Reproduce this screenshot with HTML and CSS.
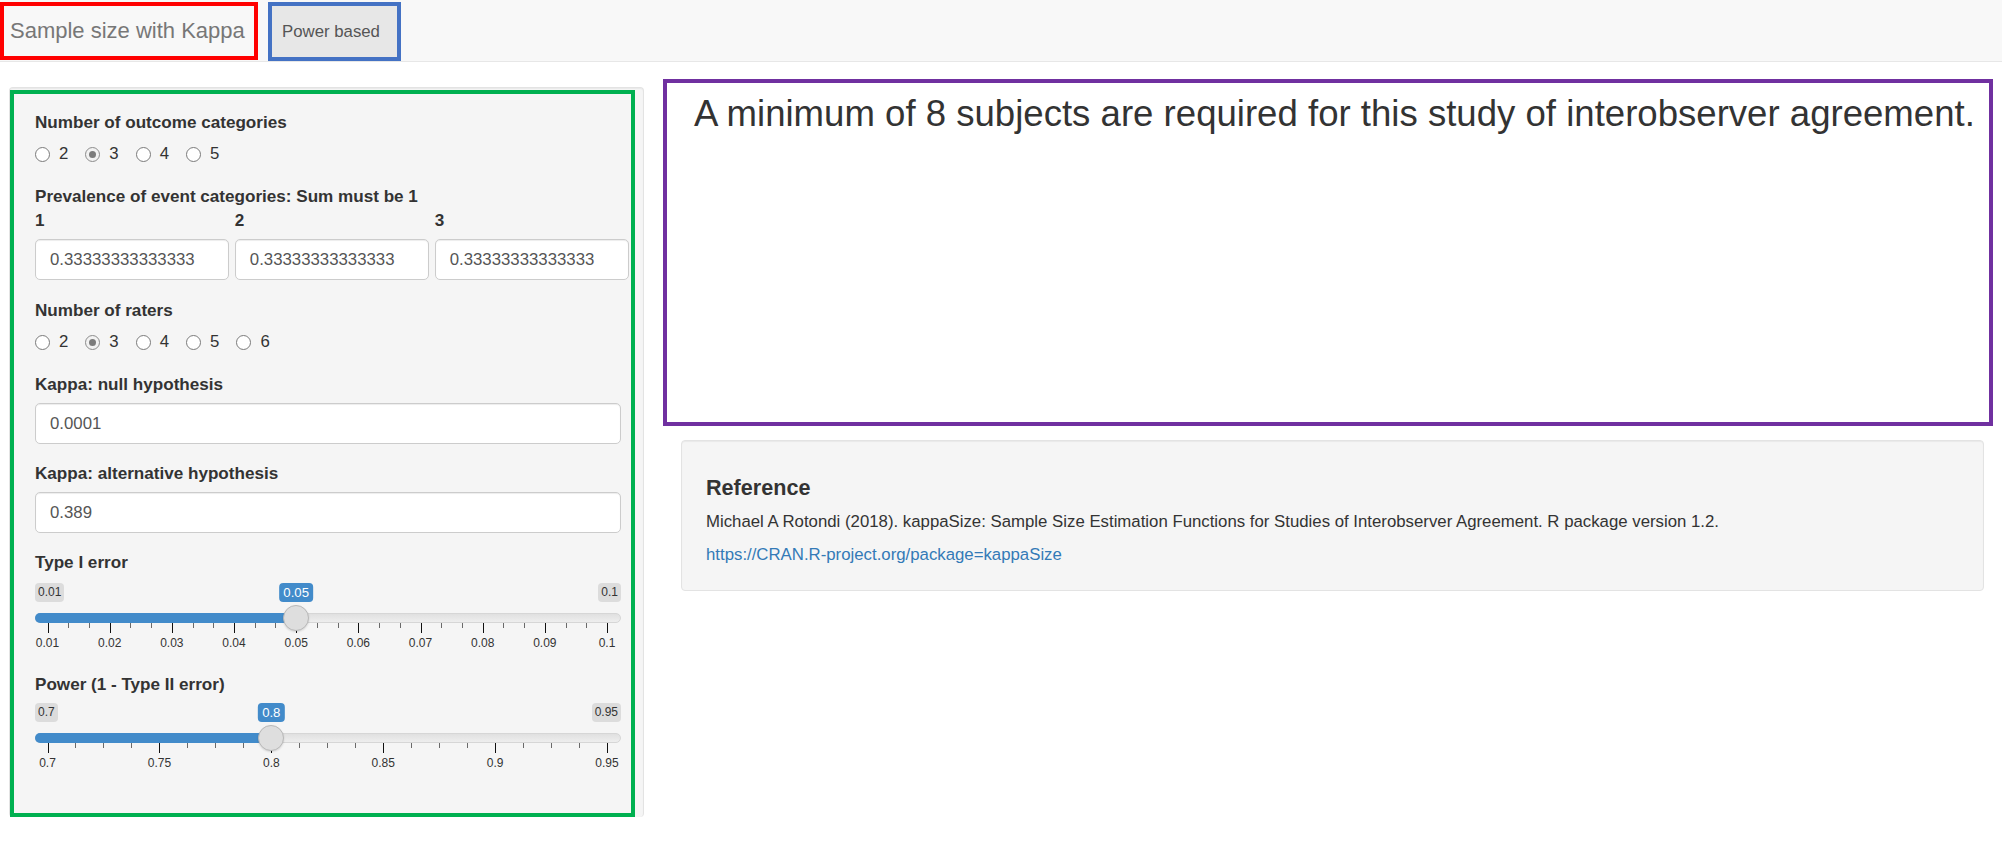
FILE: index.html
```html
<!DOCTYPE html>
<html lang="en">
<head>
<meta charset="utf-8">
<title>Sample size with Kappa</title>
<link rel="stylesheet" href="styles.css">
</head>
<body>
<nav class="navbar">
  <div class="brand">Sample size with Kappa</div>
  <div class="tab">Power based</div>
</nav>
<main class="page">
  <aside class="sidebar">
    <div class="well-side">
      <div class="annot-green">
        <div class="group">
          <div class="label">Number of outcome categories</div>
          <div class="radios">
            <span class="opt"><span class="radio"></span>2</span>
            <span class="opt"><span class="radio checked"></span>3</span>
            <span class="opt"><span class="radio"></span>4</span>
            <span class="opt"><span class="radio"></span>5</span>
          </div>
        </div>
        <div class="group group-prev">
          <div class="label label-tight">Prevalence of event categories: Sum must be 1</div>
          <div class="prev-grid">
            <div class="prev-col"><div class="label">1</div><div class="input">0.33333333333333</div></div>
            <div class="prev-col"><div class="label">2</div><div class="input">0.33333333333333</div></div>
            <div class="prev-col"><div class="label">3</div><div class="input">0.33333333333333</div></div>
          </div>
        </div>
        <div class="group">
          <div class="label">Number of raters</div>
          <div class="radios">
            <span class="opt"><span class="radio"></span>2</span>
            <span class="opt"><span class="radio checked"></span>3</span>
            <span class="opt"><span class="radio"></span>4</span>
            <span class="opt"><span class="radio"></span>5</span>
            <span class="opt"><span class="radio"></span>6</span>
          </div>
        </div>
        <div class="group">
          <div class="label">Kappa: null hypothesis</div>
          <div class="input">0.0001</div>
        </div>
        <div class="group">
          <div class="label">Kappa: alternative hypothesis</div>
          <div class="input">0.389</div>
        </div>
        <div class="group">
          <div class="label label-slider">Type I error</div>
          <div class="slider" style="--p:0.44444">
            <span class="irs-min">0.01</span>
            <span class="irs-max">0.1</span>
            <div class="irs-line"></div>
            <div class="irs-bar"></div>
            <div class="irs-grid">
              <span class="tick major" style="left:0%"></span><span class="tlabel" style="left:0%">0.01</span>
              <span class="tick" style="left:3.704%"></span><span class="tick" style="left:7.407%"></span>
              <span class="tick major" style="left:11.111%"></span><span class="tlabel" style="left:11.111%">0.02</span>
              <span class="tick" style="left:14.815%"></span><span class="tick" style="left:18.519%"></span>
              <span class="tick major" style="left:22.222%"></span><span class="tlabel" style="left:22.222%">0.03</span>
              <span class="tick" style="left:25.926%"></span><span class="tick" style="left:29.630%"></span>
              <span class="tick major" style="left:33.333%"></span><span class="tlabel" style="left:33.333%">0.04</span>
              <span class="tick" style="left:37.037%"></span><span class="tick" style="left:40.741%"></span>
              <span class="tick major" style="left:44.444%"></span><span class="tlabel" style="left:44.444%">0.05</span>
              <span class="tick" style="left:48.148%"></span><span class="tick" style="left:51.852%"></span>
              <span class="tick major" style="left:55.556%"></span><span class="tlabel" style="left:55.556%">0.06</span>
              <span class="tick" style="left:59.259%"></span><span class="tick" style="left:62.963%"></span>
              <span class="tick major" style="left:66.667%"></span><span class="tlabel" style="left:66.667%">0.07</span>
              <span class="tick" style="left:70.370%"></span><span class="tick" style="left:74.074%"></span>
              <span class="tick major" style="left:77.778%"></span><span class="tlabel" style="left:77.778%">0.08</span>
              <span class="tick" style="left:81.481%"></span><span class="tick" style="left:85.185%"></span>
              <span class="tick major" style="left:88.889%"></span><span class="tlabel" style="left:88.889%">0.09</span>
              <span class="tick" style="left:92.593%"></span><span class="tick" style="left:96.296%"></span>
              <span class="tick major" style="left:100%"></span><span class="tlabel" style="left:100%">0.1</span>
            </div>
            <div class="irs-handle"></div>
            <span class="irs-single">0.05</span>
          </div>
        </div>
        <div class="group group-last">
          <div class="label">Power (1 - Type II error)</div>
          <div class="slider" style="--p:0.4">
            <span class="irs-min">0.7</span>
            <span class="irs-max">0.95</span>
            <div class="irs-line"></div>
            <div class="irs-bar"></div>
            <div class="irs-grid">
              <span class="tick major" style="left:0%"></span><span class="tlabel" style="left:0%">0.7</span>
              <span class="tick" style="left:5%"></span><span class="tick" style="left:10%"></span><span class="tick" style="left:15%"></span>
              <span class="tick major" style="left:20%"></span><span class="tlabel" style="left:20%">0.75</span>
              <span class="tick" style="left:25%"></span><span class="tick" style="left:30%"></span><span class="tick" style="left:35%"></span>
              <span class="tick major" style="left:40%"></span><span class="tlabel" style="left:40%">0.8</span>
              <span class="tick" style="left:45%"></span><span class="tick" style="left:50%"></span><span class="tick" style="left:55%"></span>
              <span class="tick major" style="left:60%"></span><span class="tlabel" style="left:60%">0.85</span>
              <span class="tick" style="left:65%"></span><span class="tick" style="left:70%"></span><span class="tick" style="left:75%"></span>
              <span class="tick major" style="left:80%"></span><span class="tlabel" style="left:80%">0.9</span>
              <span class="tick" style="left:85%"></span><span class="tick" style="left:90%"></span><span class="tick" style="left:95%"></span>
              <span class="tick major" style="left:100%"></span><span class="tlabel" style="left:100%">0.95</span>
            </div>
            <div class="irs-handle"></div>
            <span class="irs-single">0.8</span>
          </div>
        </div>
      </div>
    </div>
  </aside>
  <section class="main-col">
    <div class="output-box">
      <h1 class="result">A minimum of 8 subjects are required for this study of interobserver agreement.</h1>
    </div>
    <div class="ref">
      <h4 class="ref-title">Reference</h4>
      <p class="ref-text">Michael A Rotondi (2018). kappaSize: Sample Size Estimation Functions for Studies of Interobserver Agreement. R package version 1.2.</p>
      <p class="ref-text ref-last"><a class="ref-link" href="#">https://CRAN.R-project.org/package=kappaSize</a></p>
    </div>
  </section>
</main>
</body>
</html>
```

FILE: styles.css
```css
html, body {
  margin: 0;
  padding: 0;
}

body {
  font-family: "Liberation Sans", Arial, Helvetica, sans-serif;
  font-size: 16.8px;
  line-height: 24px;
  color: #333;
  background: #fff;
}

/* ---------- navbar ---------- */
.navbar {
  display: flex;
  align-items: flex-start;
  height: 61px;
  background: #f8f8f8;
  border-bottom: 1px solid #e7e7e7;
}

.brand {
  box-sizing: border-box;
  display: flex;
  align-items: center;
  margin-top: 2px;
  width: 258px;
  height: 58px;
  padding-left: 6px;
  border: 4px solid #ff0000;
  font-size: 22px;
  color: #777;
  white-space: nowrap;
}

.tab {
  box-sizing: border-box;
  display: flex;
  align-items: center;
  margin-top: 2px;
  margin-left: 10px;
  width: 133px;
  height: 59px;
  padding-left: 10px;
  border: 4px solid #4472c4;
  background: #e7e7e7;
  color: #555;
  white-space: nowrap;
}

/* ---------- page layout ---------- */
.page {
  display: flex;
  align-items: flex-start;
  padding-left: 9px;
}

.sidebar {
  width: 635px;
  flex: 0 0 635px;
  margin-top: 25px;
}

.well-side {
  box-sizing: border-box;
  background: #f5f5f5;
  border: 1px solid #e3e3e3;
  border-bottom: 0;
  border-radius: 4px;
  padding: 2px 8px 0 0;
  box-shadow: inset 0 1px 1px rgba(0, 0, 0, 0.05);
}

.annot-green {
  border: 4px solid #00b050;
  padding: 17px 10px 38px 21px;
}

/* ---------- form ---------- */
.group {
  margin-bottom: 18px;
}

.group-prev {
  margin-bottom: 19px;
}

.group-last {
  margin-bottom: 0;
}

.label {
  font-weight: bold;
  font-size: 17.1px;
  margin-bottom: 6px;
  white-space: nowrap;
}

.label-tight {
  margin-bottom: 0;
}

.label-slider {
  margin-bottom: 8px;
}

.radios {
  display: flex;
  align-items: center;
  gap: 17px;
  height: 26px;
}

.opt {
  display: flex;
  align-items: center;
  gap: 9px;
}

.radio {
  box-sizing: border-box;
  display: inline-block;
  width: 15px;
  height: 15px;
  border: 1px solid #7a7a7a;
  border-radius: 50%;
  background: #fff;
  position: relative;
}

.radio.checked {
  border-color: #8c8c8c;
  background: #f2f2f2;
}

.radio.checked::after {
  content: "";
  position: absolute;
  left: 3px;
  top: 3px;
  width: 7px;
  height: 7px;
  border-radius: 50%;
  background: #7c7c7c;
}

.prev-grid {
  display: grid;
  grid-template-columns: repeat(3, 1fr);
  column-gap: 5.5px;
  margin-right: -8px;
}

.input {
  box-sizing: border-box;
  height: 41px;
  line-height: 39px;
  padding: 0 14px;
  border: 1px solid #ccc;
  border-radius: 5px;
  background: #fff;
  color: #555;
  box-shadow: inset 0 1px 1px rgba(0, 0, 0, 0.075);
  white-space: nowrap;
  overflow: hidden;
}

/* ---------- range slider ---------- */
.slider {
  position: relative;
  height: 72px;
}

.irs-min,
.irs-max,
.irs-single {
  position: absolute;
  top: 0;
  height: 19px;
  line-height: 19px;
  border-radius: 4px;
  white-space: nowrap;
}

.irs-min,
.irs-max {
  padding: 0 3px;
  font-size: 12px;
  background: #dcdcdc;
  color: #333;
}

.irs-min {
  left: 0;
}

.irs-max {
  right: 0;
}

.irs-single {
  left: calc(12.5px + 559.5px * var(--p));
  transform: translateX(-50%);
  padding: 0 4px;
  font-size: 13.2px;
  background: #428bca;
  color: #fff;
  z-index: 3;
}

.irs-line {
  box-sizing: border-box;
  position: absolute;
  top: 30px;
  left: 0;
  right: 0;
  height: 10px;
  border-radius: 5px;
  border: 1px solid #d6d6d6;
  background: linear-gradient(#e0e0e0, #eeeeee);
}

.irs-bar {
  position: absolute;
  top: 30px;
  left: 0;
  height: 10px;
  width: calc(12.5px + 559.5px * var(--p));
  border-radius: 5px 0 0 5px;
  background: #428bca;
}

.irs-handle {
  box-sizing: border-box;
  position: absolute;
  top: 22px;
  left: calc(12.5px + 559.5px * var(--p) - 13px);
  width: 26px;
  height: 26px;
  border-radius: 50%;
  border: 1px solid #b8b8b8;
  background: #dedede;
  box-shadow: 0 1px 2px rgba(0, 0, 0, 0.12);
  z-index: 2;
}

.irs-grid {
  position: absolute;
  top: 40px;
  left: 12.5px;
  width: 559.5px;
  height: 30px;
}

.tick {
  position: absolute;
  top: 0;
  width: 1px;
  height: 5px;
  background: #6a6a6a;
}

.tick.major {
  height: 10px;
  background: #111;
}

.tlabel {
  position: absolute;
  top: 13px;
  transform: translateX(-50%);
  font-size: 12px;
  line-height: 14px;
  color: #333;
  white-space: nowrap;
}

/* ---------- main column ---------- */
.main-col {
  flex: 0 0 1330px;
  width: 1330px;
  margin-left: 19px;
  margin-top: 17px;
}

.output-box {
  box-sizing: border-box;
  height: 347px;
  border: 4px solid #7030a0;
  padding: 11px 0 0 27px;
}

.result {
  margin: 0;
  font-size: 36.6px;
  line-height: 39.6px;
  font-weight: normal;
  color: #333;
  white-space: nowrap;
}

.ref {
  margin: 14px 9px 0 18px;
  padding: 23px 23px 23px 24px;
  background: #f5f5f5;
  border: 1px solid #e3e3e3;
  border-radius: 4px;
  box-shadow: inset 0 1px 1px rgba(0, 0, 0, 0.05);
}

.ref-title {
  margin: 12px 0 10px;
  font-size: 21.6px;
  line-height: 23.8px;
  font-weight: bold;
  color: #333;
}

.ref-text {
  margin: 0 0 9px;
}

.ref-last {
  margin-bottom: 0;
}

.ref-link {
  color: #337ab7;
  text-decoration: none;
}
```
